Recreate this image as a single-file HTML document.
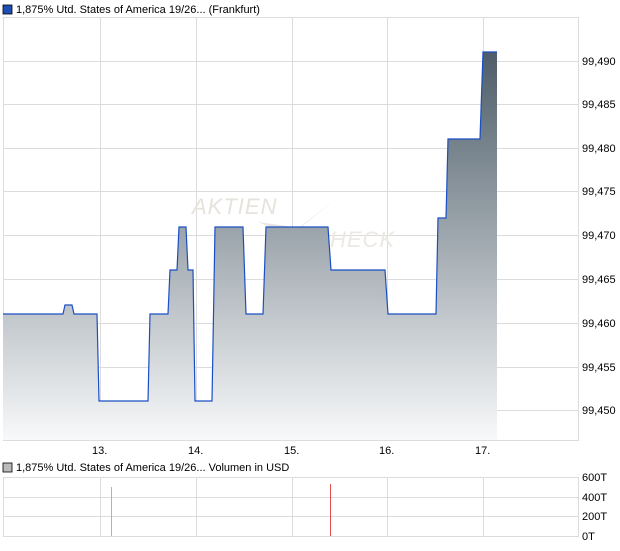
<!DOCTYPE html>
<html><head><meta charset="utf-8"><style>
body{margin:0;background:#fff;width:620px;height:546px;overflow:hidden;font-family:"Liberation Sans",sans-serif;}
svg text{font-family:"Liberation Sans",sans-serif;font-size:11px;fill:#000;}
</style></head><body>
<svg width="620" height="546" viewBox="0 0 620 546" xmlns="http://www.w3.org/2000/svg">
<defs>
<linearGradient id="g" x1="0" y1="52" x2="0" y2="440" gradientUnits="userSpaceOnUse">
<stop offset="0" stop-color="#4d5d69"/>
<stop offset="1" stop-color="#f8f9fa"/>
</linearGradient>
</defs>
<rect x="3" y="5" width="9" height="9" fill="#1f4fb5" stroke="#000" stroke-width="0.8"/>
<text x="16" y="13">1,875% Utd. States of America 19/26... (Frankfurt)</text>
<g stroke="#dcdcdc" stroke-width="1" fill="none">
<rect x="3.5" y="17.5" width="575" height="423"/>
<path d="M100.5 17V440M196.5 17V440M292.5 17V440M387.5 17V440M483.5 17V440"/>
<path d="M3 61.5H578M3 104.5H578M3 148.5H578M3 191.5H578M3 235.5H578M3 279.5H578M3 323.5H578M3 367.5H578M3 410.5H578"/>
</g>
<g fill="#e8e4de" font-style="italic">
<text x="192" y="214" style="font-size:22px;fill:#e6e2dc;font-style:italic;letter-spacing:1px">AKTIEN</text>
<text x="330" y="247" style="font-size:22px;fill:#ece9e4;font-style:italic;letter-spacing:1px">HECK</text>
<path d="M258 222 L290 235 L338 197 L300 228 Z" fill="#e8e4de"/>
</g>
<path d="M3 314H63L65 305H72L74 314H97L99 401H148L150 314H168L170 270H177L179 227H186L188 270H193L195 401H212L215 227H243L246 314H263L266 227H328L331 270H385L388 314H436L438 218H446L448 139H480L483 52H497V440H3Z" fill="url(#g)"/>
<path d="M3 314H63L65 305H72L74 314H97L99 401H148L150 314H168L170 270H177L179 227H186L188 270H193L195 401H212L215 227H243L246 314H263L266 227H328L331 270H385L388 314H436L438 218H446L448 139H480L483 52H497" fill="none" stroke="#1a4fc4" stroke-width="1.2"/>
<text x="582" y="65">99,490</text>
<text x="582" y="108">99,485</text>
<text x="582" y="152">99,480</text>
<text x="582" y="195">99,475</text>
<text x="582" y="239">99,470</text>
<text x="582" y="283">99,465</text>
<text x="582" y="327">99,460</text>
<text x="582" y="371">99,455</text>
<text x="582" y="414">99,450</text>
<text x="92" y="454">13.</text>
<text x="188" y="454">14.</text>
<text x="284" y="454">15.</text>
<text x="379" y="454">16.</text>
<text x="475" y="454">17.</text>
<rect x="3" y="463" width="9" height="9" fill="#bbb" stroke="#000" stroke-width="0.8"/>
<text x="16" y="471">1,875% Utd. States of America 19/26... Volumen in USD</text>
<g stroke="#dcdcdc" stroke-width="1" fill="none">
<rect x="3.5" y="477.5" width="575" height="59"/>
<path d="M3 497.5H578M3 516.5H578"/>
<path d="M100.5 477V536M196.5 477V536M292.5 477V536M387.5 477V536M483.5 477V536"/>
</g>
<path d="M111.5 487V536" stroke="#c8a8a8" stroke-width="1"/>
<path d="M330.5 484V536" stroke="#e05050" stroke-width="1"/>
<text x="582" y="481">600T</text>
<text x="582" y="501">400T</text>
<text x="582" y="520">200T</text>
<text x="582" y="540">0T</text>
</svg>
</body></html>
